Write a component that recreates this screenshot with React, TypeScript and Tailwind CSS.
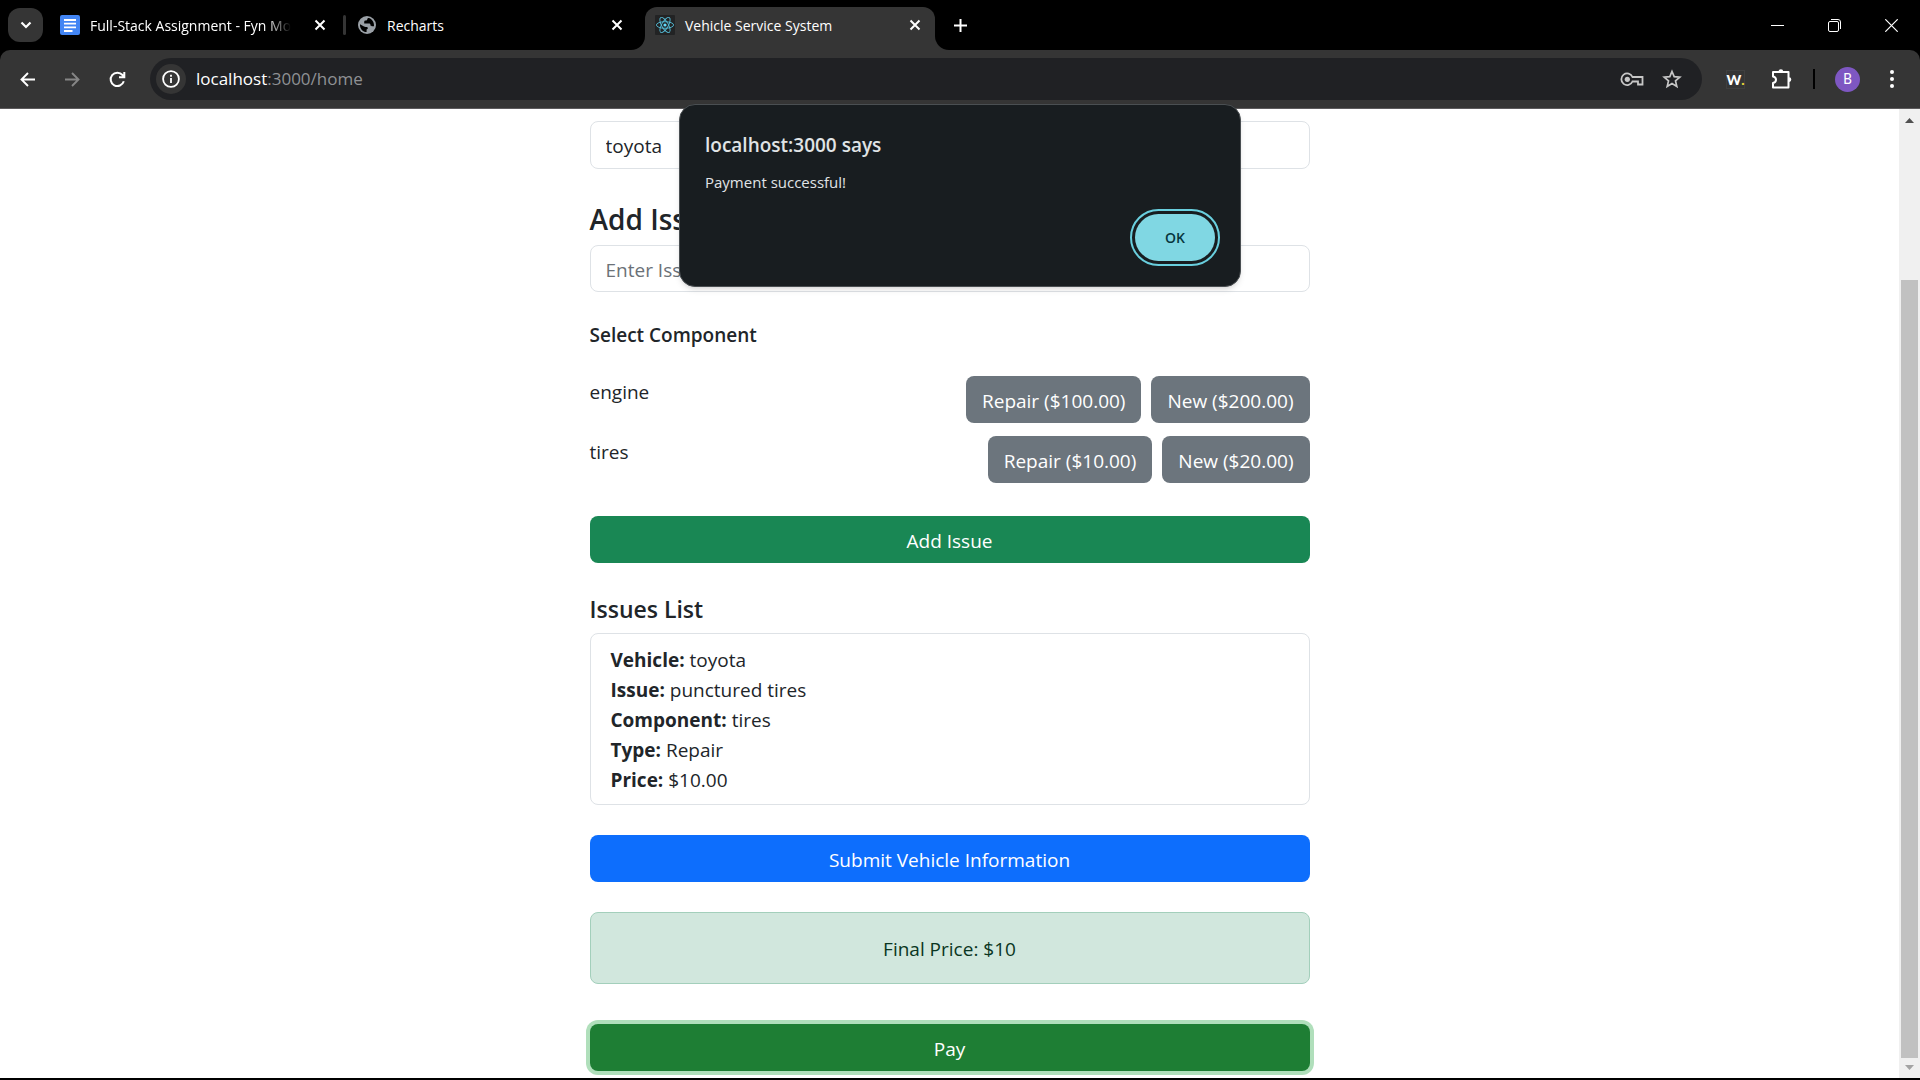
import React from "react";

const REACT_ORBITS = [0, 60, 120];

function CloseIcon() {
  return (
    <svg width="12" height="12" viewBox="0 0 12 12" fill="none" stroke="currentColor" strokeWidth="2">
      <path d="M1.5 1.5l9 9M10.5 1.5l-9 9" />
    </svg>
  );
}

function DocsIcon() {
  return (
    <svg width="20" height="20" viewBox="0 0 20 20" className="shrink-0">
      <rect width="20" height="20" rx="2" fill="#4285f4" />
      <path d="M4 5h12M4 8.7h12M4 12.3h12M4 16h8.5" stroke="#fff" strokeWidth="1.8" />
    </svg>
  );
}

function GlobeIcon() {
  return (
    <svg width="18" height="18" viewBox="0 0 18 18" className="shrink-0">
      <circle cx="9" cy="9" r="9" fill="#9aa0a6" />
      <path d="M11 2c-1 0-1.700.4-1.700 1.300 0 .9-.8 1.200-1.800 1.200-1 0-1.300.7-1.300 1.500v1.500H11c1 0 1.500.7 1.500 1.500s.6 1.200 1.500 1.200h2c.3-3.600-1.600-7-5-8.200z" fill="#000" />
      <path d="M2 8.200l4 2.300c.4.3 1 .5 1.600.5h.9c.8 0 1.300.5 1.300 1.200 0 .8-.6 1-1.200 1.300v2.600C4.700 16 1.600 12.500 2 8.200z" fill="#000" />
    </svg>
  );
}

function ReactIcon() {
  return (
    <svg width="20" height="20" viewBox="0 0 20 20" className="shrink-0">
      <rect width="20" height="20" rx="1" fill="#222324" />
      <g fill="none" stroke="#55bdd8" strokeWidth="0.9">
        {REACT_ORBITS.map((angle) => (
          <ellipse key={angle} cx="10" cy="10" rx="8.6" ry="3.300" transform={`rotate(${angle} 10 10)`} />
        ))}
      </g>
      <circle cx="10" cy="10" r="1.6" fill="#61dafb" />
    </svg>
  );
}

function TabStrip() {
  return (
    <header className="flex h-[50px] items-center bg-black text-[14px] text-white">
      <button aria-label="Search tabs" className="ml-2 flex h-[34px] w-[35px] shrink-0 items-center justify-center rounded-xl bg-[#353535]">
        <svg width="12" height="8" viewBox="0 0 12 8" fill="none" stroke="#fff" strokeWidth="2.200">
          <path d="M1.500 1.500L6 6l4.500-4.500" />
        </svg>
      </button>
      <div className="ml-[17px] flex w-[266px] items-center">
        <DocsIcon />
        <span className="ml-[10px] whitespace-nowrap [mask-image:linear-gradient(to_right,#000_88%,transparent)]">
          Full-Stack Assignment - Fyn Mo
        </span>
        <button aria-label="Close Full-Stack Assignment" className="ml-auto"><CloseIcon /></button>
      </div>
      <span className="ml-[17px] h-5 w-[3px] rounded bg-[#353535]" />
      <div className="ml-[12px] flex w-[265px] items-center">
        <GlobeIcon />
        <span className="ml-[11px]">Recharts</span>
        <button aria-label="Close Recharts" className="ml-auto"><CloseIcon /></button>
      </div>
      <div className="flex self-stretch pt-[7px]">
        <div className="ml-2 w-[14px] self-end bg-[#353535]">
          <div className="h-[14px] rounded-br-[14px] bg-black" />
        </div>
        <div className="flex w-[290px] items-center rounded-t-xl bg-[#353535] pr-[14px] pb-[7px] pl-[10px]">
          <ReactIcon />
          <span className="ml-[10px]">Vehicle Service System</span>
          <button aria-label="Close Vehicle Service System" className="ml-auto"><CloseIcon /></button>
        </div>
        <div className="w-[14px] self-end bg-[#353535]">
          <div className="h-[14px] rounded-bl-[14px] bg-black" />
        </div>
      </div>
      <button aria-label="New tab" className="ml-[5px]">
        <svg width="13" height="13" viewBox="0 0 13 13" stroke="#fff" strokeWidth="2">
          <path d="M6.500 0v13M0 6.500h13" />
        </svg>
      </button>
      <div className="mr-[22px] ml-auto flex items-center gap-[44px]">
        <button aria-label="Minimize">
          <svg width="13" height="13" viewBox="0 0 13 13" stroke="#fff"><path d="M0 6.500h13" /></svg>
        </button>
        <button aria-label="Restore">
          <svg width="13" height="13" viewBox="0 0 13 13" fill="none" stroke="#fff">
            <rect x="0.500" y="2.500" width="10" height="10" rx="1.500" />
            <path d="M3 .5h7a2.500 2.500 0 0 1 2.500 2.500v7" />
          </svg>
        </button>
        <button aria-label="Close window">
          <svg width="13" height="13" viewBox="0 0 13 13" stroke="#fff" strokeWidth="1.200"><path d="M.3.3l12.400 12.400M12.700.3L.3 12.700" /></svg>
        </button>
      </div>
    </header>
  );
}

function Toolbar() {
  return (
    <div className="bg-black">
      <div className="flex h-[59px] items-center rounded-t-[10px] border-b border-[#5c5a5c] bg-[#353535] pr-[26px] pl-5">
        <button aria-label="Back">
          <svg width="15" height="15" viewBox="0 0 15 15" fill="none" stroke="#fff" strokeWidth="1.900"><path d="M15 7.500H1.500M8 1L1.500 7.500 8 14" /></svg>
        </button>
        <button aria-label="Forward" className="ml-[30px]">
          <svg width="15" height="15" viewBox="0 0 15 15" fill="none" stroke="#868686" strokeWidth="1.900"><path d="M0 7.500h13.500M7 1l6.500 6.500L7 14" /></svg>
        </button>
        <button aria-label="Reload" className="ml-[29px]">
          <svg width="17" height="17" viewBox="0 0 17 17" fill="none" stroke="#fff" strokeWidth="2">
            <path d="M14.800 10.300A6.700 6.700 0 1 1 13.500 4l1.500 1.600M15.300 1v5.300H10" />
          </svg>
        </button>
        <div className="ml-[24px] flex h-[42px] flex-1 items-center rounded-full bg-[#202124] pr-5 pl-[6px]">
          <button aria-label="Site information" className="flex size-[30px] items-center justify-center rounded-full bg-[#353535]">
            <svg width="18" height="18" viewBox="0 0 18 18" fill="none" stroke="#fff" strokeWidth="1.800">
              <circle cx="9" cy="9" r="7.900" />
              <path d="M9 8v5M9 4.800v1.900" />
            </svg>
          </button>
          <div className="ml-[10px] text-[17px] text-[#8f9194]">
            <span className="text-white">localhost</span>:3000/home
          </div>
          <button aria-label="Passwords" className="ml-auto">
            <svg width="24" height="15" viewBox="0 0 24 15" fill="none" stroke="#c7c7c7" strokeWidth="1.800">
              <path d="M12.500 5H22.500v7.500h-4.500V9.500h-5.500A5.800 5.800 0 1 1 12.500 5z" />
              <circle cx="7.300" cy="7.300" r="2.600" fill="#c7c7c7" stroke="none" />
            </svg>
          </button>
          <button aria-label="Bookmark this tab" className="ml-[18px]">
            <svg width="20" height="20" viewBox="0 0 20 20" fill="none" stroke="#c7c7c7" strokeWidth="1.700">
              <path d="M10 2.500l2.200 5.200 5.600.5-4.300 3.700 1.300 5.500-4.800-2.900-4.800 2.900 1.300-5.500-4.300-3.700 5.600-.5z" />
            </svg>
          </button>
        </div>
        <button className="ml-6 flex size-[19px] items-center justify-center border border-[#3f3f3f] font-[Lato] text-[14px] font-black text-white">
          W<span className="text-[#e8dc3a]">.</span>
        </button>
        <button aria-label="Extensions" className="ml-[26px]">
          <svg width="21" height="21" viewBox="0 0 21 21" fill="none" stroke="#fff" strokeWidth="2" strokeLinejoin="round">
            <path d="M2 3h15.500v15.500H2V14c4-.8 4-5.700 0-6.500z" />
            <path d="M7.600 2.500a2.300 2.300 0 0 1 4.600 0zM18 8.300a2.300 2.300 0 0 1 0 4.600z" fill="#fff" stroke="none" />
          </svg>
        </button>
        <span className="ml-[21px] h-5 w-[2px] bg-black" />
        <button className="ml-5 flex size-[25px] items-center justify-center rounded-full bg-[#7e57c2] font-[Roboto] text-[14px] text-white">B</button>
        <button aria-label="Browser menu" className="ml-[30px]">
          <svg width="4" height="18" viewBox="0 0 4 18" fill="#fff">
            <circle cx="2" cy="2" r="2" /><circle cx="2" cy="9" r="2" /><circle cx="2" cy="16" r="2" />
          </svg>
        </button>
      </div>
    </div>
  );
}

const COMPONENTS = [
  { name: "engine", repair: "100.00", fresh: "200.00" },
  { name: "tires", repair: "10.00", fresh: "20.00" },
];

const ISSUE = [
  ["Vehicle", "toyota"],
  ["Issue", "punctured tires"],
  ["Component", "tires"],
  ["Type", "Repair"],
  ["Price", "$10.00"],
];

function ServicePage() {
  return (
    <main className="min-w-0 flex-1 overflow-hidden text-[19px] leading-[30px] text-[#212529]">
      <div className="mx-auto w-full max-w-[720px] pt-3">
        <input aria-label="Vehicle" defaultValue="toyota" className="block h-12 w-full rounded-lg border border-[#dee2e6] px-[15px] pt-px" />
        <h3 className="mt-8 mb-2 text-[28px] leading-9 font-semibold">Add Issue</h3>
        <input aria-label="Issue" placeholder="Enter Issue" className="block h-[47px] w-full rounded-lg border border-[#dee2e6] px-[15px] pt-[2px] placeholder:text-[#6b7177]" />
        <h5 className="mt-7 text-[19px] font-semibold">Select Component</h5>
        <ul className="mt-[26px] flex flex-col gap-[13px]">
          {COMPONENTS.map((item) => (
            <li key={item.name} className="flex items-start gap-[10px]">
              <span className="mr-auto pt-px">{item.name}</span>
              <button className="h-[47px] rounded-lg bg-[#6c757d] px-4 pt-[2px] text-white">Repair (${item.repair})</button>
              <button className="h-[47px] rounded-lg bg-[#6c757d] px-4 pt-[2px] text-white">New (${item.fresh})</button>
            </li>
          ))}
        </ul>
        <button className="mt-[33px] h-[47px] w-full rounded-lg bg-[#198754] pt-[2px] text-white">Add Issue</button>
        <h4 className="mt-[31px] text-[23px] font-semibold">Issues List</h4>
        <ul className="mt-[9px] rounded-lg border border-[#dee2e6] px-5 pt-[11px] pb-[9px]">
          {ISSUE.map(([label, value]) => (
            <li key={label}><strong className="font-bold">{label}:</strong> {value}</li>
          ))}
        </ul>
        <button className="mt-[30px] h-[47px] w-full rounded-lg bg-[#0d6efd] pt-[2px] text-white">Submit Vehicle Information</button>
        <div role="status" className="mt-[30px] rounded-lg border border-[#a3cfbb] bg-[#d1e7dd] pt-[21px] pb-[19px] text-center text-[#0a3622]">Final Price: $10</div>
        <button className="mt-10 h-[47px] w-full rounded-lg bg-[#1e7e34] pt-[2px] text-white ring-4 ring-[#b0dfbb]">Pay</button>
      </div>
    </main>
  );
}

function Scrollbar() {
  return (
    <div className="flex w-[21px] flex-col items-center bg-[#f0f0f0]">
      <svg width="9" height="5" viewBox="0 0 9 5" className="mt-[9px] mb-[7px] shrink-0"><path d="M0 5h9L4.500 0z" fill="#505050" /></svg>
      <div className="grow-[150]" />
      <div className="w-[17px] grow-[778] bg-[#c1c1c1]" />
      <svg width="9" height="5" viewBox="0 0 9 5" className="mt-[7px] mb-2 shrink-0"><path d="M0 0h9L4.500 5z" fill="#a3a3a3" /></svg>
    </div>
  );
}

function AlertDialog() {
  return (
    <div role="alertdialog" aria-labelledby="alert-title" aria-describedby="alert-text" className="absolute top-[104px] left-1/2 flex w-[562px] -translate-x-1/2 flex-col rounded-2xl border border-[#4a4f52] bg-[#181d20] px-[25px] pt-6 pb-[25px] text-[#e0e4e6] shadow-md">
      <h2 id="alert-title" className="text-[19px] leading-8 font-semibold">localhost:3000 says</h2>
      <p id="alert-text" className="mt-[11px] text-[15px] leading-5">Payment successful!</p>
      <button className="mt-[22px] h-[47px] w-20 self-end rounded-full bg-[#80d7e3] text-[14px] font-semibold text-[#07363d] outline-2 outline-offset-3 outline-[#69cfde]">OK</button>
    </div>
  );
}

export default function App() {
  return (
    <div className="relative flex h-screen flex-col border-b-2 border-black bg-white font-['Open_Sans','Noto_Sans',sans-serif]">
      <TabStrip />
      <Toolbar />
      <div className="flex min-h-0 flex-1">
        <ServicePage />
        <Scrollbar />
      </div>
      <AlertDialog />
    </div>
  );
}
